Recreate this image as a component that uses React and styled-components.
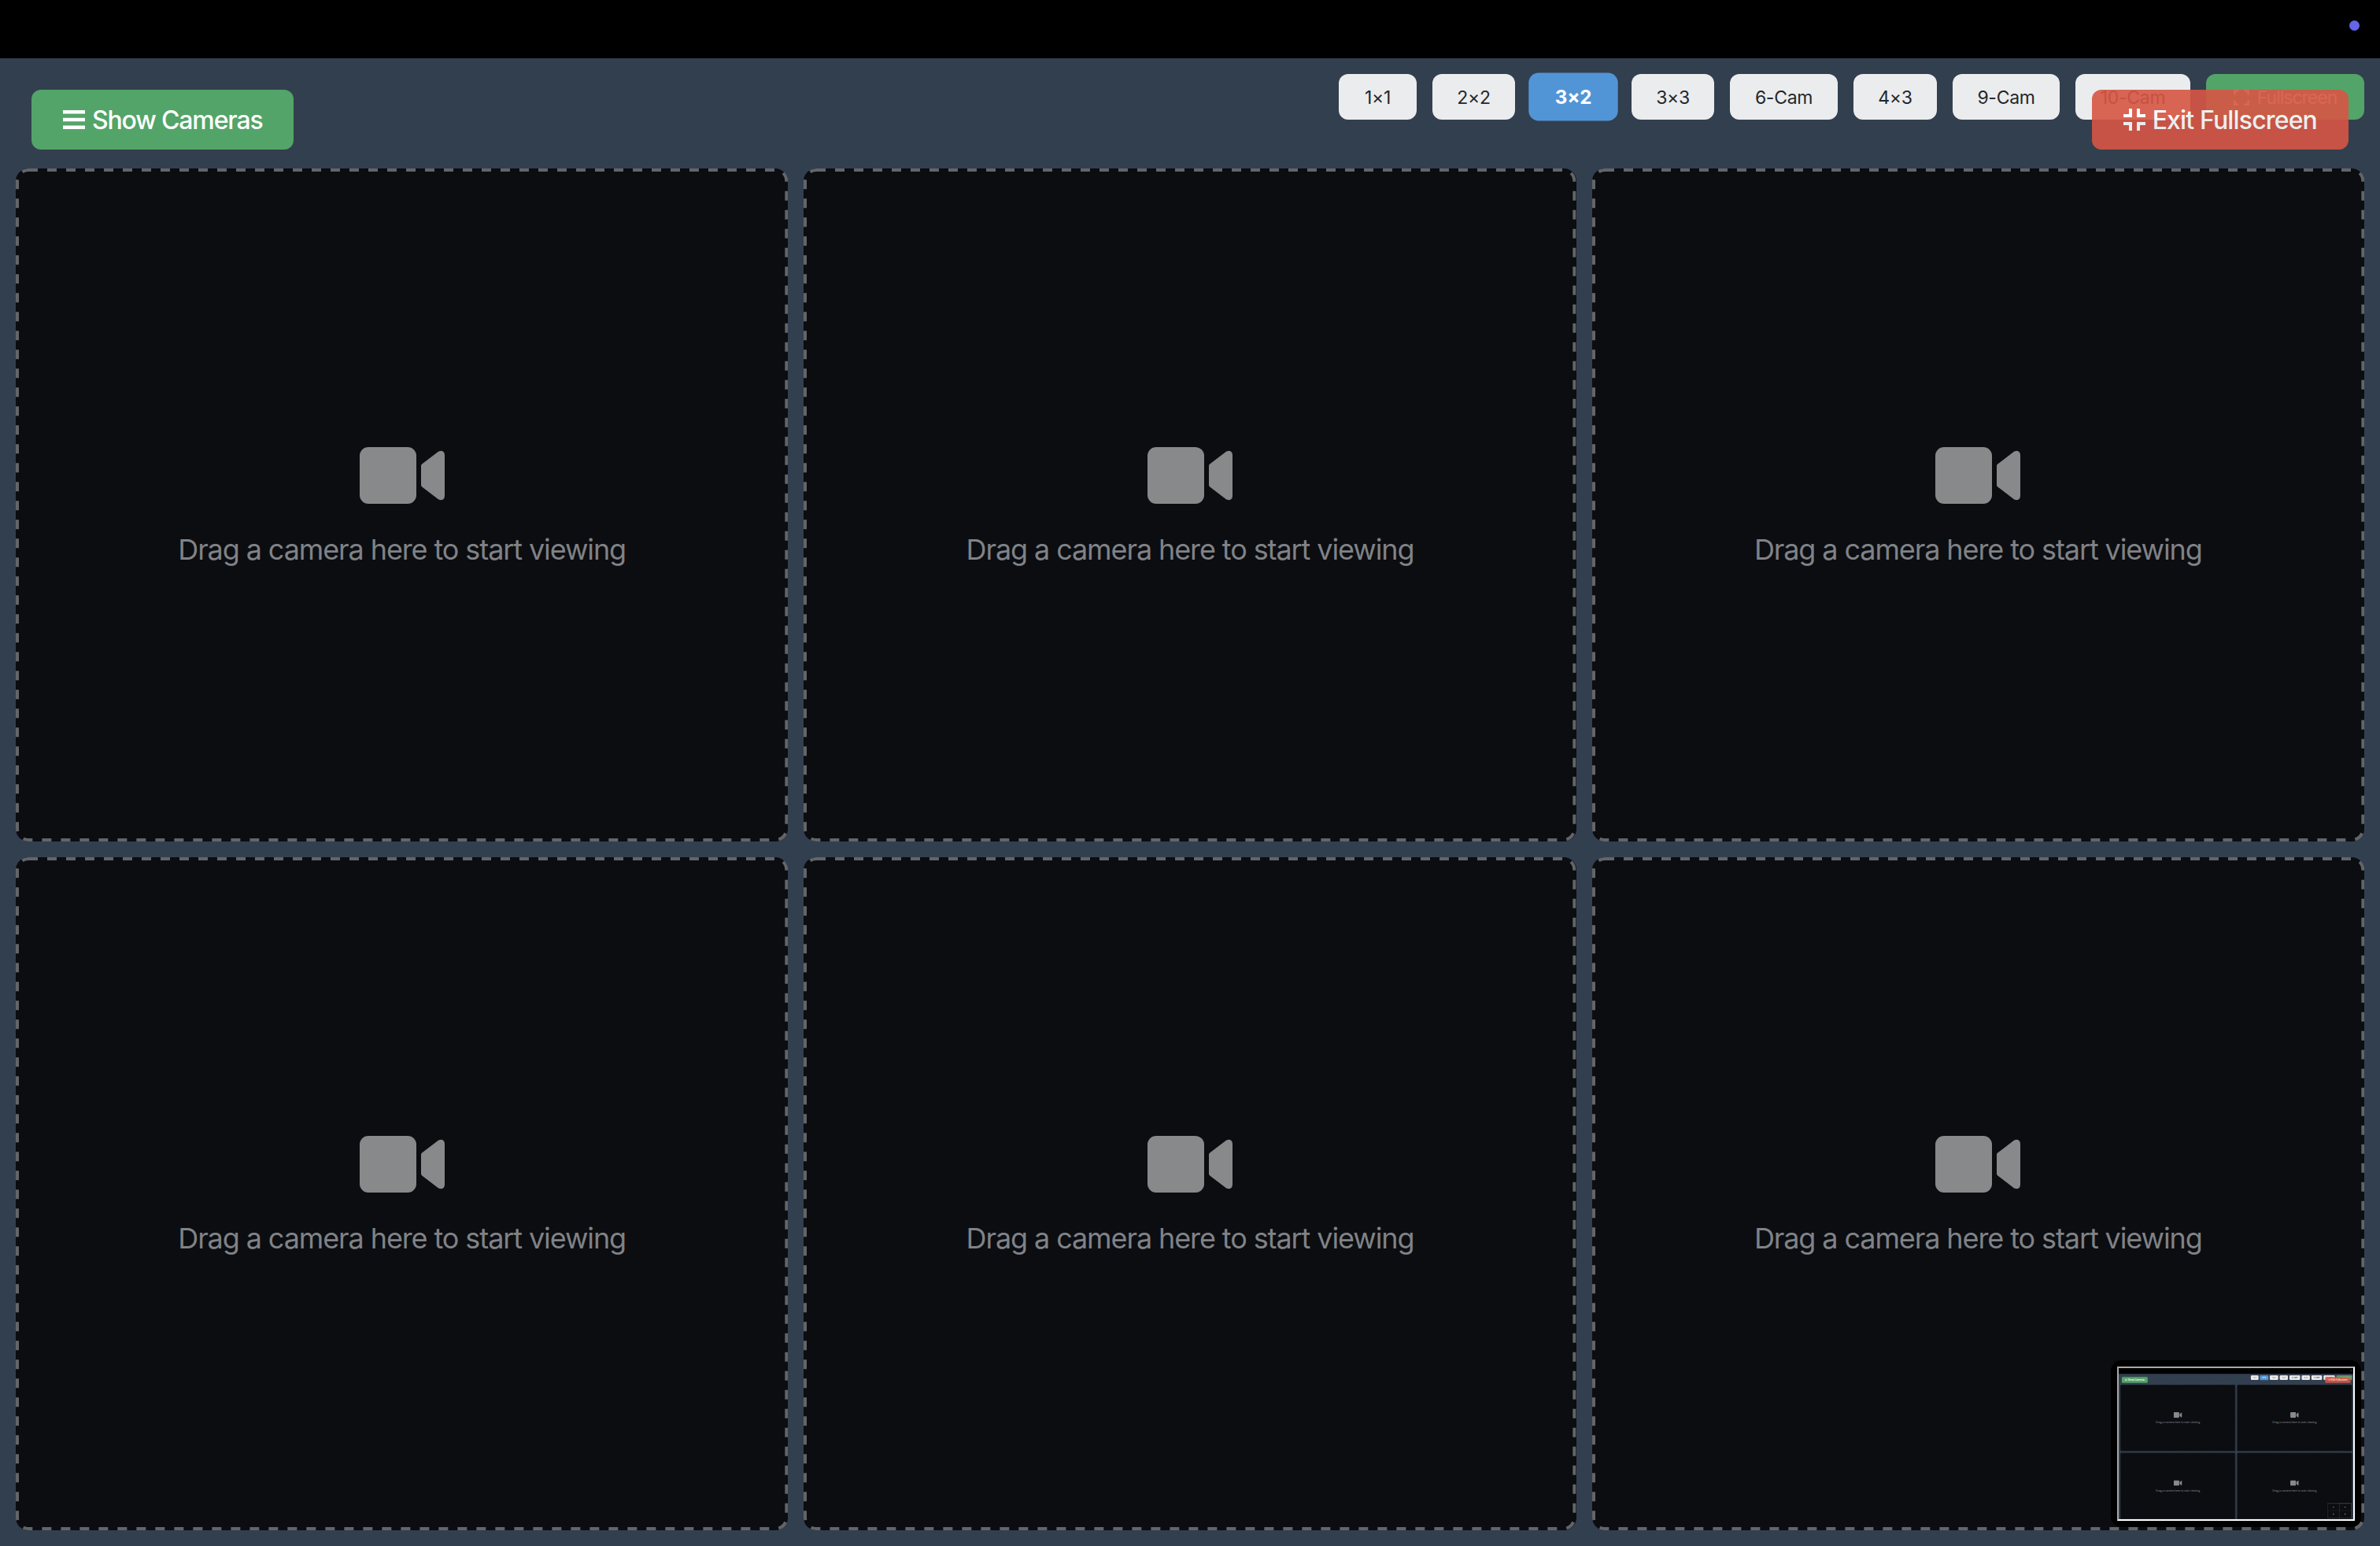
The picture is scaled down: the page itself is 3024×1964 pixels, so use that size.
import React from "react";
import styled, { createGlobalStyle } from "styled-components";

const Global = createGlobalStyle`
  html, body { margin: 0; padding: 0; background: #000; }
  * { box-sizing: border-box; }
`;

const Screen = styled.div`
  position: relative;
  width: 3024px;
  height: 1964px;
  display: flex;
  flex-direction: column;
  overflow: hidden;
  background: #323f4f;
  font-family: Inter, "Liberation Sans", sans-serif;
`;

const StatusBar = styled.div`
  height: 74px;
  flex: none;
  background: #000;
  display: flex;
  justify-content: flex-end;
  padding: 26px 26px 0 0;
`;

const StatusDot = styled.span`
  width: 13px;
  height: 13px;
  border-radius: 50%;
  background: #6366e8;
`;

const Toolbar = styled.div`
  height: 140px;
  flex: none;
  display: flex;
  justify-content: flex-end;
  align-items: flex-start;
  gap: 20px;
  padding: 20px 20px 0;
`;

const LayoutButton = styled.button`
  width: ${(p) => p.$width}px;
  height: 58px;
  padding: 2px 0 0;
  border: 0;
  border-radius: 12px;
  font-family: inherit;
  font-size: 23px;
  letter-spacing: -0.3px;
  font-weight: ${(p) => (p.$active ? 700 : 400)};
  color: ${(p) => (p.$active ? "#fff" : "#23272b")};
  background: ${(p) => (p.$active ? "#5295d6" : "#ebecee")};
  transform: ${(p) => (p.$active ? "scale(1.05)" : "none")};
  display: inline-flex;
  align-items: center;
  justify-content: center;
`;

const FullscreenButton = styled(LayoutButton)`
  background: #53a468;
  color: #fff;
  gap: 10px;
  letter-spacing: -1px;
`;

const OverlayButton = styled.button`
  position: absolute;
  top: 114px;
  height: 76px;
  padding: 0 40px;
  border: 0;
  border-radius: 12px;
  color: #fff;
  font-family: inherit;
  font-size: 32px;
  font-weight: 500;
  display: flex;
  align-items: center;
  gap: 9px;
  z-index: 5;
`;

const ShowCameras = styled(OverlayButton)`
  left: 40px;
  background: #53a468;
  letter-spacing: -1.15px;
`;

const ExitFullscreen = styled(OverlayButton)`
  right: 40px;
  background: #d75644;
  opacity: 0.9;
  letter-spacing: -0.85px;
`;

const Grid = styled.div`
  flex: 1;
  min-height: 0;
  display: grid;
  grid-template-columns: repeat(${(p) => p.$cols}, 1fr);
  grid-template-rows: repeat(${(p) => p.$rows}, 1fr);
  gap: 20px;
  padding: 0 20px 20px;
`;

const Cell = styled.div`
  position: relative;
  min-width: 0;
  min-height: 0;
  border-radius: 16px;
  background: #0b0d11;
  display: flex;
  flex-direction: column;
  align-items: center;
  justify-content: center;
  gap: 36px;
  padding-top: 4px;
`;

const DashFrame = styled.svg`
  position: absolute;
  inset: 0;
  width: 100%;
  height: 100%;
  z-index: 2;
  pointer-events: none;
`;

const DashRect = styled.rect`
  x: 2px;
  y: 2px;
  width: calc(100% - 4px);
  height: calc(100% - 4px);
  rx: 14px;
  ry: 14px;
  fill: none;
  stroke: #636568;
  stroke-width: 4px;
  stroke-dasharray: 12 12;
`;

const Hint = styled.div`
  font-size: 36px;
  line-height: 44px;
  letter-spacing: -1.1px;
  color: #808286;
`;

const Pip = styled.div`
  position: absolute;
  right: 4px;
  bottom: 4px;
  width: 318px;
  height: 212px;
  padding: 8px;
  background: #000;
  border-radius: 14px 14px 12px 14px;
`;

const PipFrame = styled.div`
  width: 302px;
  height: 196px;
  overflow: hidden;
  border-style: solid;
  border-width: 2px;
  border-color: #a8a8a8 #fff #fff #a8a8a8;
`;

const PipScale = styled.div`
  width: 3024px;
  height: 1964px;
  transform: scale(0.0987);
  transform-origin: 0 0;
`;

const ThumbDrawing = styled.svg`
  display: block;
  width: 100%;
  height: 100%;
`;

const CameraIcon = () => (
  <svg width="108" height="72" viewBox="0 0 108 72" aria-hidden="true">
    <rect width="72" height="72" rx="11" fill="#88898b" />
    <path
      d="M81 24 L102 8 Q105 7 105 10 L105 62 Q105 65 102 64 L81 48 Z"
      fill="#88898b"
      stroke="#88898b"
      strokeWidth="6"
      strokeLinejoin="round"
    />
  </svg>
);

const MenuIcon = () => (
  <svg width="28" height="24" viewBox="0 0 28 24" aria-hidden="true">
    <path d="M0 0h28v4.5H0zM0 9.75h28v4.5H0zM0 19.5h28V24H0z" fill="#fff" />
  </svg>
);

const CompressIcon = () => (
  <svg width="28" height="28" viewBox="0 0 28 28" fill="none" stroke="#fff" strokeWidth="4" aria-hidden="true">
    <path d="M9 0v9H0M19 0v9h9M0 19h9v9M28 19h-9v9" />
  </svg>
);

const ExpandIcon = () => (
  <svg width="20" height="20" viewBox="0 0 28 28" fill="none" stroke="#fff" strokeWidth="4" aria-hidden="true">
    <path d="M2 9V2h7M19 2h7v7M2 19v7h7M26 19v7h-7" />
  </svg>
);

/* The last, illegible generation of the picture-in-picture feedback. */
const FeedbackThumb = () => (
  <ThumbDrawing viewBox="0 0 298 192" preserveAspectRatio="none" aria-hidden="true">
    <rect width="298" height="192" fill="#0b0d11" />
    <path d="M0 1h150" stroke="#8c8c8c" strokeWidth="6" />
    <path d="M150 1h148" stroke="#d8d8d8" strokeWidth="6" />
    <path d="M149 4v188" stroke="#555" strokeWidth="6" strokeDasharray="14 10" />
    <path d="M0 96h298" stroke="#444" strokeWidth="4" strokeDasharray="14 10" />
    <path d="M66 52h12M216 52h12M66 142h12M216 142h12" stroke="#8a8a8a" strokeWidth="14" />
  </ThumbDrawing>
);

const LAYOUTS = [
  { label: "1×1", width: 99 },
  { label: "2×2", width: 105 },
  { label: "3×2", width: 108 },
  { label: "3×3", width: 105 },
  { label: "6-Cam", width: 137 },
  { label: "4×3", width: 106 },
  { label: "9-Cam", width: 136 },
  { label: "10-Cam", width: 146 },
];

function Wall({ cols, rows, active, depth }) {
  const count = cols * rows;
  return (
    <Screen>
      <StatusBar>
        <StatusDot />
      </StatusBar>
      <Toolbar>
        {LAYOUTS.map(({ label, width }) => (
          <LayoutButton key={label} $width={width} $active={label === active}>
            {label}
          </LayoutButton>
        ))}
        <FullscreenButton $width={201}>
          <ExpandIcon />
          Fullscreen
        </FullscreenButton>
      </Toolbar>
      <ShowCameras>
        <MenuIcon />
        Show Cameras
      </ShowCameras>
      <ExitFullscreen>
        <CompressIcon />
        Exit Fullscreen
      </ExitFullscreen>
      <Grid $cols={cols} $rows={rows}>
        {Array.from({ length: count }, (_, i) => (
          <Cell key={i}>
            <CameraIcon />
            <Hint>Drag a camera here to start viewing</Hint>
            {i === count - 1 && (
              <Pip>
                <PipFrame>
                  {depth > 0 ? (
                    <PipScale>
                      <Wall cols={2} rows={2} active="2×2" depth={depth - 1} />
                    </PipScale>
                  ) : (
                    <FeedbackThumb />
                  )}
                </PipFrame>
              </Pip>
            )}
            <DashFrame aria-hidden="true">
              <DashRect />
            </DashFrame>
          </Cell>
        ))}
      </Grid>
    </Screen>
  );
}

export default function App() {
  return (
    <>
      <Global />
      <Wall cols={3} rows={2} active="3×2" depth={1} />
    </>
  );
}
